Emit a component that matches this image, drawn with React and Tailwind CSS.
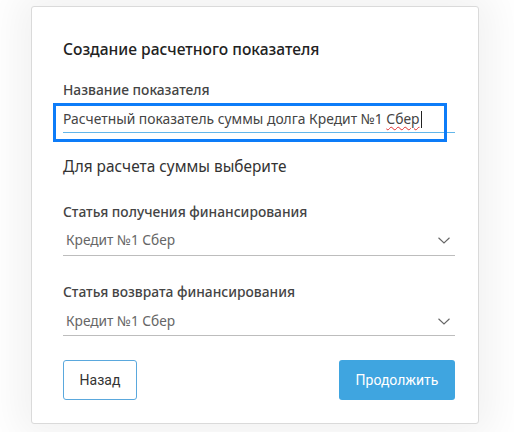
export default function App() {
  const font = { fontFamily: '"Noto Sans", "Open Sans", Arial, sans-serif' };
  const btnFont = { fontFamily: 'Roboto, "Liberation Sans", Arial, sans-serif' };
  const Chevron = () => (
    <svg width="12" height="7" viewBox="0 0 12 7" fill="none" className="shrink-0">
      <path d="M0.5 0.75 L6 6 L11.5 0.75" stroke="#666" strokeWidth="1.1" />
    </svg>
  );
  return (
    <div className="relative h-[432px] w-[514px] overflow-hidden bg-white" style={font}>
      <div className="absolute left-[31px] top-[6px] flex h-[418px] w-[448px] flex-col rounded-[3px] border border-[#dadada] bg-white pl-[31px] pr-[23px] pt-[32px] shadow-[0_0_40px_14px_rgba(0,0,0,0.055)]">
        <div className="h-[21px] text-[15.6px] font-medium leading-[21px] text-[#222]">Создание расчетного показателя</div>
        <div className="mt-[21px] h-[18px] text-[13.8px] font-medium leading-[18px] text-[#444]">Название показателя</div>
        <div className="relative mt-[6px] border-b border-[#62b6ea] pb-[3px] pt-[4px]">
          <div className="flex h-[20px] items-center text-[13.85px] leading-[20px] text-[#444]">
            <span className="whitespace-nowrap">
              Расчетный показатель суммы долга Кредит №1{' '}
              <span className="underline decoration-[#e03030] decoration-wavy decoration-1 underline-offset-2">Сбер</span>
            </span>
            <span className="ml-[1px] inline-block h-[17px] w-[1px] bg-[#222]" />
          </div>
          <div className="absolute -left-[10px] -top-[2px] h-[39px] w-[394px] border-[3px] border-[#0d7cf8]" />
        </div>
        <div className="mt-[23px] h-[22px] text-[15.4px] leading-[22px] text-[#333]">Для расчета суммы выберите</div>
        <div className="mt-[25px] h-[18px] text-[13.8px] font-medium leading-[18px] text-[#444]">Статья получения финансирования</div>
        <div className="flex items-center justify-between border-b border-[#bdbdbd] pb-[5px] pl-[3px] pr-[5px] pt-[9px]">
          <span className="h-[20px] text-[13.7px] leading-[20px] text-[#666]">Кредит №1 Сбер</span>
          <Chevron />
        </div>
        <div className="mt-[27px] h-[18px] text-[13.8px] font-medium leading-[18px] text-[#444]">Статья возврата финансирования</div>
        <div className="flex items-center justify-between border-b border-[#bdbdbd] pb-[4px] pl-[3px] pr-[5px] pt-[10px]">
          <span className="h-[20px] text-[13.7px] leading-[20px] text-[#666]">Кредит №1 Сбер</span>
          <Chevron />
        </div>
        <div className="mt-[24px] flex items-center justify-between" style={btnFont}>
          <button className="h-[40px] w-[74px] rounded-[3px] border border-[#5aa8dd] bg-white text-[14px] text-[#333]">Назад</button>
          <button className="h-[40px] w-[116px] rounded-[3px] bg-[#3fa5e0] text-[14px] font-normal text-white">Продолжить</button>
        </div>
      </div>
    </div>
  );
}
